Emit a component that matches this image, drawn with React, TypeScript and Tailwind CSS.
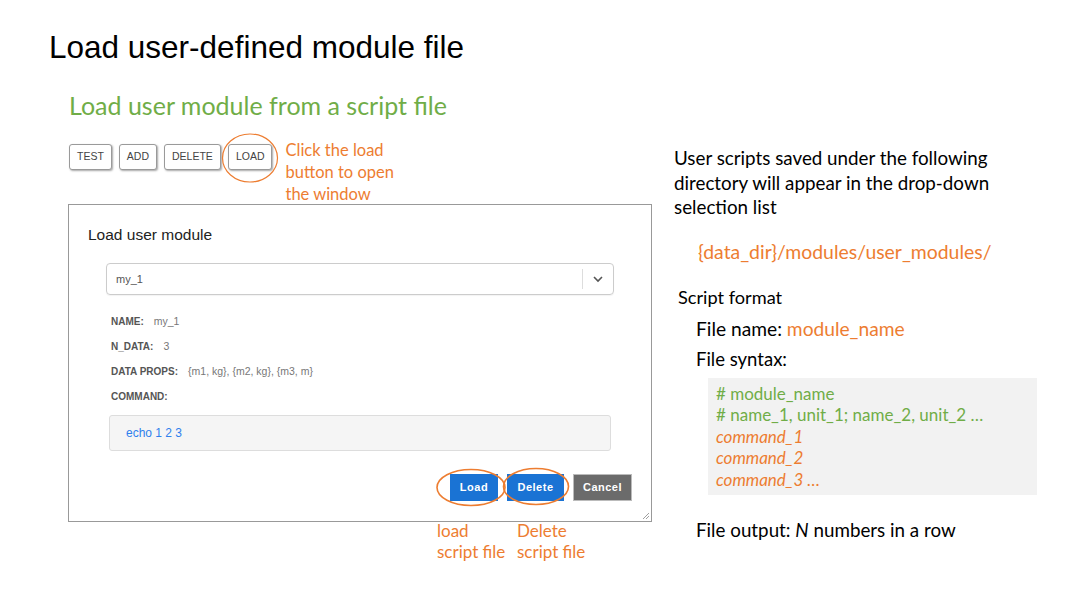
import React from "react";

const calibri = { fontFamily: "Lato, 'Open Sans', sans-serif" };

function TopButton({ label }: { label: string }) {
  return (
    <div className="h-[26px] px-[7px] flex items-center justify-center border border-[#9a9a9a] rounded-[3px] bg-white shadow-[1px_1px_2px_rgba(0,0,0,0.35)] text-[10.5px] text-[#444] font-['Liberation_Sans',Arial,sans-serif]">
      {label}
    </div>
  );
}

function Field({ label, value }: { label: string; value: string }) {
  return (
    <div className="flex items-center h-[25px] text-[10px] font-['Liberation_Sans',Arial,sans-serif]">
      <span className="font-bold text-[#555]">{label}</span>
      <span className="ml-[10px] text-[10.5px] text-[#777]">{value}</span>
    </div>
  );
}

export default function App() {
  return (
    <div className="w-[1080px] h-[608px] bg-white overflow-hidden flex flex-col">
      <h1 className="ml-[49px] mt-[29px] text-[31.5px] leading-[36px] text-black font-['Liberation_Sans',Arial,sans-serif]">
        Load user-defined module file
      </h1>
      <div className="flex">
        {/* Left column */}
        <div className="ml-[68px] w-[584px] flex flex-col">
          <div className="mt-[25px] ml-[1px] text-[25px] leading-[30px] text-[#70ad47]" style={calibri}>
            Load user module from a script file
          </div>
          <div className="mt-[24px] ml-[1px] h-[26px] flex items-start">
            <div className="flex gap-[7px]">
              <TopButton label="TEST" />
              <TopButton label="ADD" />
              <TopButton label="DELETE" />
              <div className="relative">
                <TopButton label="LOAD" />
                <svg className="absolute left-[-6px] top-[-11px] overflow-visible" width="58" height="50" viewBox="0 0 58 50">
                  <ellipse cx="28" cy="25" rx="27.5" ry="24" fill="none" stroke="#ed7d31" strokeWidth="1.2" />
                </svg>
              </div>
            </div>
            <div className="ml-[13px] mt-[-5px] text-[16.5px] leading-[22px] text-[#ed7d31] w-[130px]" style={calibri}>
              Click the load button to open the window
            </div>
          </div>
          {/* Dialog */}
          <div className="mt-[34px] w-[584px] h-[318px] border border-[#999] bg-white relative flex flex-col">
            <div className="ml-[19px] mt-[20px] text-[15.5px] leading-[20px] text-[#222] font-['Liberation_Sans',Arial,sans-serif]">
              Load user module
            </div>
            <div className="ml-[37px] mt-[18px] w-[508px] h-[32px] border border-[#ccc] rounded-[4px] flex items-center shadow-[0_1px_1px_rgba(0,0,0,0.05)]">
              <span className="ml-[9px] flex-1 text-[11px] text-[#555] font-['Liberation_Sans',Arial,sans-serif]">my_1</span>
              <div className="w-px h-[20px] bg-[#ddd]" />
              <div className="w-[30px] flex items-center justify-center">
                <svg width="12" height="8" viewBox="0 0 12 8">
                  <path d="M2 2 L6 6 L10 2" fill="none" stroke="#555" strokeWidth="1.6" />
                </svg>
              </div>
            </div>
            <div className="ml-[42px] mt-[14px] flex flex-col">
              <Field label="NAME:" value="my_1" />
              <Field label="N_DATA:" value="3" />
              <Field label="DATA PROPS:" value="{m1, kg}, {m2, kg}, {m3, m}" />
              <Field label="COMMAND:" value="" />
            </div>
            <div className="ml-[40px] mt-[6px] w-[502px] h-[36px] bg-[#f5f5f5] border border-[#ddd] rounded-[3px] flex items-center">
              <span className="ml-[16px] text-[12px] text-[#2f80ed] font-['Liberation_Sans',Arial,sans-serif]">echo 1 2 3</span>
            </div>
            <div className="mt-[23px] mr-[19px] flex justify-end gap-[9px]">
              <div className="relative">
                <div className="w-[48px] h-[27px] bg-[#1a73d4] flex items-center justify-center text-white text-[11px] font-bold tracking-[0.5px] font-['Liberation_Sans',Arial,sans-serif]">
                  Load
                </div>
                <svg className="absolute left-[-14px] top-[-5px] overflow-visible" width="70" height="37" viewBox="0 0 70 37">
                  <ellipse cx="35" cy="18.5" rx="34" ry="18" fill="none" stroke="#ed7d31" strokeWidth="1.6" />
                </svg>
              </div>
              <div className="relative">
                <div className="w-[57px] h-[27px] bg-[#1a73d4] flex items-center justify-center text-white text-[11px] font-bold tracking-[0.5px] font-['Liberation_Sans',Arial,sans-serif]">
                  Delete
                </div>
                <svg className="absolute left-[-4px] top-[-6px] overflow-visible" width="66" height="37" viewBox="0 0 66 37">
                  <ellipse cx="33" cy="18.5" rx="32.5" ry="18" fill="none" stroke="#ed7d31" strokeWidth="1.6" />
                </svg>
              </div>
              <div className="w-[59px] h-[27px] bg-[#6b6b6b] border border-[#bbb] flex items-center justify-center text-white text-[11px] font-bold tracking-[0.5px] font-['Liberation_Sans',Arial,sans-serif]">
                Cancel
              </div>
            </div>
            <svg className="absolute right-[1px] bottom-[1px]" width="8" height="8" viewBox="0 0 8 8">
              <path d="M7 1 L1 7 M7 4 L4 7" stroke="#888" strokeWidth="0.8" />
            </svg>
          </div>
          <div className="flex mt-[-2px] text-[17px] leading-[21px] text-[#ed7d31]" style={calibri}>
            <div className="ml-[369px] w-[80px]">load<br />script file</div>
            <div>Delete<br />script file</div>
          </div>
        </div>
        {/* Right column */}
        <div className="ml-[22px] mt-[81px] flex flex-col text-[18.8px] text-black" style={calibri}>
          <div className="leading-[24.5px] w-[360px]">
            User scripts saved under the following directory will appear in the drop-down selection list
          </div>
          <div className="mt-[20px] ml-[24px] leading-[24px] text-[19.4px] text-[#ed7d31]">
            {"{data_dir}/modules/user_modules/"}
          </div>
          <div className="mt-[21px] ml-[4px] leading-[24px] text-[18.2px]">Script format</div>
          <div className="mt-[8px] ml-[22px] leading-[24px] text-[19.2px]">
            File name: <span className="text-[#ed7d31]">module_name</span>
          </div>
          <div className="mt-[6px] ml-[22px] leading-[24px] text-[18.5px]">File syntax:</div>
          <div className="mt-[7px] ml-[34px] w-[329px] h-[117px] bg-[#f2f2f2] pt-[5px] pl-[8px] text-[17px] leading-[21.5px]">
            <div className="text-[#70ad47]"># module_name</div>
            <div className="text-[#70ad47]"># name_1, unit_1; name_2, unit_2 …</div>
            <div className="text-[#ed7d31] italic">command_1</div>
            <div className="text-[#ed7d31] italic">command_2</div>
            <div className="text-[#ed7d31] italic">command_3 …</div>
          </div>
          <div className="mt-[23px] ml-[22px] leading-[24px]">
            File output: <i>N</i> numbers in a row
          </div>
        </div>
      </div>
    </div>
  );
}
